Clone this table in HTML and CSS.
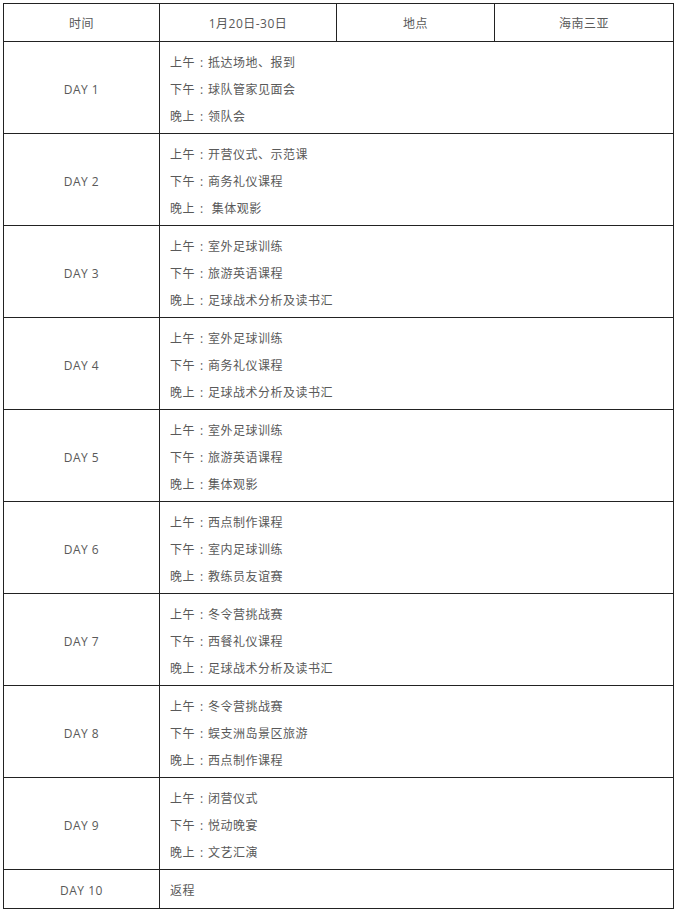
FILE: index.html
```html
<!DOCTYPE html>
<html lang="zh">
<head>
<meta charset="utf-8">
<link rel="stylesheet" href="styles.css">
</head>
<body>
<table class="sched">
  <colgroup>
    <col class="c1"><col class="c2"><col class="c3"><col class="c4">
  </colgroup>
  <tr class="head">
    <td>时间</td><td>1月20日-30日</td><td>地点</td><td>海南三亚</td>
  </tr>
  <tr class="day">
    <td class="d">DAY 1</td>
    <td class="act" colspan="3"><p>上午<span class="cl">:</span>抵达场地、报到</p><p>下午<span class="cl">:</span>球队管家见面会</p><p>晚上<span class="cl">:</span>领队会</p></td>
  </tr>
  <tr class="day">
    <td class="d">DAY 2</td>
    <td class="act" colspan="3"><p>上午<span class="cl">:</span>开营仪式、示范课</p><p>下午<span class="cl">:</span>商务礼仪课程</p><p>晚上<span class="cl">:</span> 集体观影</p></td>
  </tr>
  <tr class="day">
    <td class="d">DAY 3</td>
    <td class="act" colspan="3"><p>上午<span class="cl">:</span>室外足球训练</p><p>下午<span class="cl">:</span>旅游英语课程</p><p>晚上<span class="cl">:</span>足球战术分析及读书汇</p></td>
  </tr>
  <tr class="day">
    <td class="d">DAY 4</td>
    <td class="act" colspan="3"><p>上午<span class="cl">:</span>室外足球训练</p><p>下午<span class="cl">:</span>商务礼仪课程</p><p>晚上<span class="cl">:</span>足球战术分析及读书汇</p></td>
  </tr>
  <tr class="day">
    <td class="d">DAY 5</td>
    <td class="act" colspan="3"><p>上午<span class="cl">:</span>室外足球训练</p><p>下午<span class="cl">:</span>旅游英语课程</p><p>晚上<span class="cl">:</span>集体观影</p></td>
  </tr>
  <tr class="day">
    <td class="d">DAY 6</td>
    <td class="act" colspan="3"><p>上午<span class="cl">:</span>西点制作课程</p><p>下午<span class="cl">:</span>室内足球训练</p><p>晚上<span class="cl">:</span>教练员友谊赛</p></td>
  </tr>
  <tr class="day">
    <td class="d">DAY 7</td>
    <td class="act" colspan="3"><p>上午<span class="cl">:</span>冬令营挑战赛</p><p>下午<span class="cl">:</span>西餐礼仪课程</p><p>晚上<span class="cl">:</span>足球战术分析及读书汇</p></td>
  </tr>
  <tr class="day">
    <td class="d">DAY 8</td>
    <td class="act" colspan="3"><p>上午<span class="cl">:</span>冬令营挑战赛</p><p>下午<span class="cl">:</span>蜈支洲岛景区旅游</p><p>晚上<span class="cl">:</span>西点制作课程</p></td>
  </tr>
  <tr class="day">
    <td class="d">DAY 9</td>
    <td class="act" colspan="3"><p>上午<span class="cl">:</span>闭营仪式</p><p>下午<span class="cl">:</span>悦动晚宴</p><p>晚上<span class="cl">:</span>文艺汇演</p></td>
  </tr>
  <tr class="last">
    <td class="d">DAY 10</td>
    <td class="act" colspan="3"><p>返程</p></td>
  </tr>
</table>
</body>
</html>
```
FILE: styles.css
```css
html, body {
  margin: 0;
  padding: 0;
  background: #ffffff;
}
body {
  padding: 3px;
  font-family: "Open Sans", "Noto Sans CJK SC", sans-serif;
  font-size: 12px;
  letter-spacing: 0.5px;
  color: #595959;
}
.sched {
  border-collapse: collapse;
  table-layout: fixed;
  width: 670px;
}
.c1 { width: 156px; }
.c2 { width: 177px; }
.c3 { width: 158px; }
.c4 { width: 179px; }
.sched td {
  border: 1px solid #222222;
  padding: 0;
  vertical-align: middle;
}
.sched .head td {
  height: 36px;
  padding-top: 1px;
  text-align: center;
}
.sched .day .d {
  height: 88px;
  padding-top: 3px;
}
.sched .last .d {
  height: 36px;
  padding-top: 2px;
}
.d {
  text-align: center;
}
.sched .act {
  padding: 7px 10px 3px 10px;
  text-align: left;
}
.sched .last .act {
  padding: 7px 10px 4px 10px;
}
.act p {
  margin: 0;
  height: 27px;
  line-height: 27px;
  overflow: hidden;
  white-space: nowrap;
}
.cl {
  display: inline-block;
  width: 13px;
  text-align: center;
  letter-spacing: 0;
  line-height: 1;
}
```
